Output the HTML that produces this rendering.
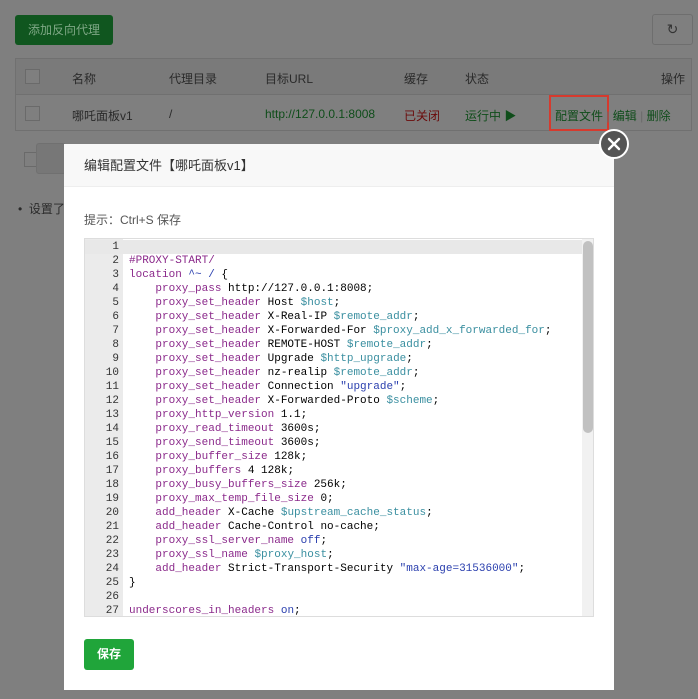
<!DOCTYPE html>
<html style="background:#7f7f7f"><head><meta charset="utf-8">
<style>
*{margin:0;padding:0;box-sizing:border-box}
html,body{width:698px;height:699px;background:#7f7f7f}
body{font-family:"Liberation Sans","Noto Sans CJK SC",sans-serif;font-size:12px;position:relative;overflow:hidden;color:#1a1a1a}
#wrap{position:absolute;left:0;top:0;width:698px;height:699px;background:#7f7f7f}
.abs{position:absolute}
.btn1{left:15px;top:15px;width:98px;height:30px;background:#10561f;border-radius:3px;color:#7fa886;line-height:30px;text-align:center;font-size:12px}
.ref{left:652px;top:14px;width:41px;height:31px;border:1px solid #6e6e6e;border-radius:3px;color:#333;text-align:center;line-height:29px;font-size:14px;background:#7f7f7f}
.tbl{left:15px;top:58px;width:677px;height:73px;border:1px solid #707070;background:#7f7f7f}
.hdr{left:0;top:0;width:675px;height:36px;background:#7a7a7a;border-bottom:1px solid #707070}
.cb{width:15px;height:15px;border:1px solid #6a6a6a;background:#7f7f7f}
.t{color:#2a2a2a}
.modal{left:64px;top:144px;width:550px;height:546px;background:#fff}
.mt{left:0;top:0;width:550px;height:43px;background:#f8f8f8;border-bottom:1px solid #eee;line-height:43px;padding-left:20px;font-size:13px;color:#333}
.ed{left:20px;top:94px;width:510px;height:379px;border:1px solid #ddd;background:#fff;overflow:hidden}
.gut{left:0;top:0;width:38px;height:379px;background:#ebebeb}
pre{font-family:"Liberation Mono",monospace;font-size:11px;line-height:14px;color:#000;margin:0}
.ln{left:0;top:1px;width:34px;text-align:right;color:#333}
.code{left:44px;top:15px}
.k{color:#8b2a8b}.v{color:#3a8fa0}.s{color:#2a3fae}
.save{left:20px;top:495px;width:50px;height:31px;background:#20a53a;border-radius:3px;color:#fff;font-weight:bold;text-align:center;line-height:31px}
</style></head><body>
<div id="wrap">
<div class="abs btn1">添加反向代理</div>
<div class="abs ref">↻</div>
<div class="abs tbl">
 <div class="abs hdr"></div>
 <div class="abs cb" style="left:9px;top:10px"></div>
 <div class="abs t" style="left:56px;top:11px">名称</div>
 <div class="abs t" style="left:153px;top:11px">代理目录</div>
 <div class="abs t" style="left:249px;top:11px">目标URL</div>
 <div class="abs t" style="left:388px;top:11px">缓存</div>
 <div class="abs t" style="left:449px;top:11px">状态</div>
 <div class="abs t" style="left:645px;top:11px">操作</div>
 <div class="abs cb" style="left:9px;top:47px"></div>
 <div class="abs t" style="left:56px;top:48px">哪吒面板v1</div>
 <div class="abs t" style="left:153px;top:48px">/</div>
 <div class="abs" style="left:249px;top:48px;color:#0f4d1a">http://127.0.0.1:8008</div>
 <div class="abs" style="left:388px;top:48px;color:#6b0b0b">已关闭</div>
 <div class="abs" style="left:449px;top:48px;color:#0f4d1a">运行中 ▶</div>
 <div class="abs" style="left:533px;top:36px;width:60px;height:36px;border:2px solid #d63a2e"></div>
 <div class="abs" style="left:539px;top:48px;color:#0f4d1a">配置文件 <span style="color:#6a6a6a">|</span> 编辑 <span style="color:#6a6a6a">|</span> 删除</div>
</div>
<div class="abs cb" style="left:24px;top:152px"></div>
<div class="abs" style="left:36px;top:143px;width:30px;height:31px;border:1px solid #707070;background:#777;border-radius:3px"></div>
<div class="abs t" style="left:18px;top:200px">•&nbsp;&nbsp;设置了</div>
<div class="abs modal">
 <div class="abs mt">编辑配置文件【哪吒面板v1】</div>
 <div class="abs" style="left:20px;top:67px;color:#555;font-size:12px">提示：Ctrl+S 保存</div>
 <div class="abs ed">
  <div class="abs gut"></div>
  <div class="abs" style="left:0;top:1px;width:508px;height:14px;background:#e8e8e8"></div>
  <pre class="abs ln">1
2
3
4
5
6
7
8
9
10
11
12
13
14
15
16
17
18
19
20
21
22
23
24
25
26
27</pre>
<pre class="abs code"><span class="k">#PROXY-START/</span>
<span class="k">location</span> <span class="s">^~ /</span> {
    <span class="k">proxy_pass</span> http://127.0.0.1:8008;
    <span class="k">proxy_set_header</span> Host <span class="v">$host</span>;
    <span class="k">proxy_set_header</span> X-Real-IP <span class="v">$remote_addr</span>;
    <span class="k">proxy_set_header</span> X-Forwarded-For <span class="v">$proxy_add_x_forwarded_for</span>;
    <span class="k">proxy_set_header</span> REMOTE-HOST <span class="v">$remote_addr</span>;
    <span class="k">proxy_set_header</span> Upgrade <span class="v">$http_upgrade</span>;
    <span class="k">proxy_set_header</span> nz-realip <span class="v">$remote_addr</span>;
    <span class="k">proxy_set_header</span> Connection <span class="s">"upgrade"</span>;
    <span class="k">proxy_set_header</span> X-Forwarded-Proto <span class="v">$scheme</span>;
    <span class="k">proxy_http_version</span> 1.1;
    <span class="k">proxy_read_timeout</span> 3600s;
    <span class="k">proxy_send_timeout</span> 3600s;
    <span class="k">proxy_buffer_size</span> 128k;
    <span class="k">proxy_buffers</span> 4 128k;
    <span class="k">proxy_busy_buffers_size</span> 256k;
    <span class="k">proxy_max_temp_file_size</span> 0;
    <span class="k">add_header</span> X-Cache <span class="v">$upstream_cache_status</span>;
    <span class="k">add_header</span> Cache-Control no-cache;
    <span class="k">proxy_ssl_server_name</span> <span class="s">off</span>;
    <span class="k">proxy_ssl_name</span> <span class="v">$proxy_host</span>;
    <span class="k">add_header</span> Strict-Transport-Security <span class="s">"max-age=31536000"</span>;
}

<span class="k">underscores_in_headers</span> <span class="s">on</span>;</pre>
  <div class="abs" style="left:497px;top:0;width:12px;height:379px;background:#f1f1f1"></div>
  <div class="abs" style="left:498px;top:2px;width:10px;height:192px;background:#c1c1c1;border-radius:5px"></div>
 </div>
 <div class="abs save">保存</div>
</div>
<div class="abs" style="left:599px;top:129px;width:30px;height:30px;border-radius:50%;background:#555;border:2px solid #fff">
 <svg width="26" height="26" viewBox="0 0 26 26" style="position:absolute;left:0;top:0"><path d="M8 8L18 18M18 8L8 18" stroke="#fff" stroke-width="2.4" stroke-linecap="round"/></svg>
</div>
</div>
</body></html>
